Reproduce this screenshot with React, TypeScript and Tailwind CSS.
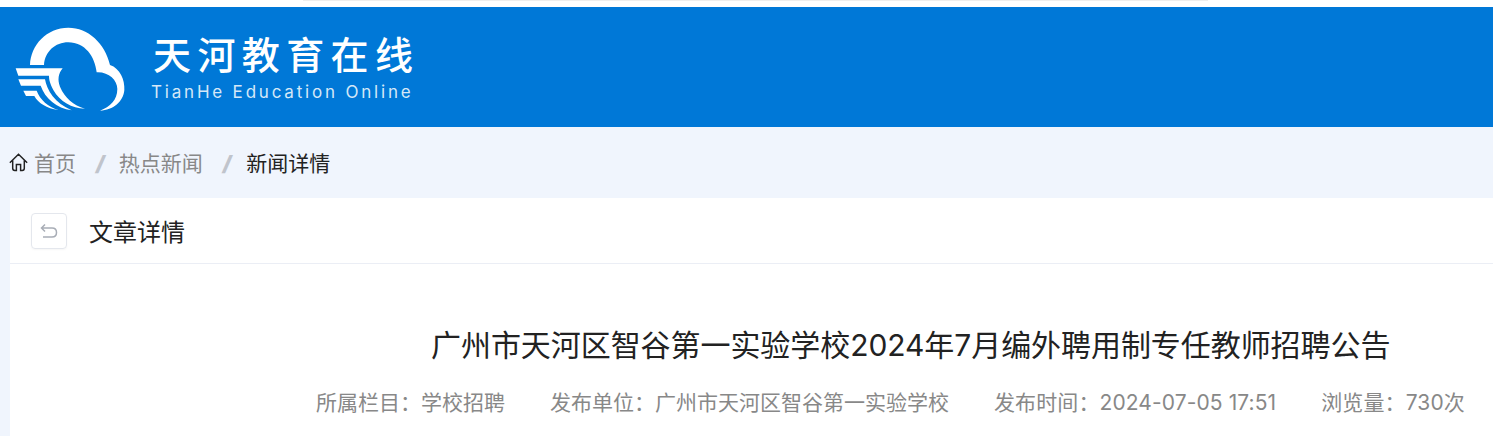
const COLON = '\uFF1A';

const Logo = () => (
  <svg width="140" height="105" viewBox="0 0 420 315" className="shrink-0">
    <path
      fill="#fff"
      d="M90 150 C92 90 140 38 205 38 C265 38 315 85 330 150 C360 160 375 195 373 225 C370 260 340 285 300 287 C330 275 352 255 352 222 C352 195 325 170 290 172 C285 125 255 82 205 82 C165 82 135 110 132 150 Z"
    />
    <path fill="#fff" d="M47 160 H188 C175 175 172 195 180 215 C195 250 220 270 255 281 C215 280 180 260 160 225 C150 205 147 195 147 182 H55 Z" />
    <path fill="#fff" d="M55 193 H135 C140 225 165 265 215 286 C170 280 135 250 122 212 H63 Z" />
    <path fill="#fff" d="M70 227 H110 C120 255 145 275 175 285 C140 280 115 265 103 243 H78 Z" />
  </svg>
);

export default function App() {
  return (
    <div className="flex h-[436px] flex-col overflow-hidden bg-white font-['Inter','Noto_Sans_CJK_SC',sans-serif]">
      <div className="h-[7px]">
        <div className="ml-[303px] h-[1px] w-[905px] bg-[#eeeeee]" />
      </div>
      <div className="flex h-[120px] items-center bg-[#0078d7]">
        <Logo />
        <div className="ml-[13px] flex flex-col text-white">
          <div className="text-[38px] leading-[44px] font-medium tracking-[6.4px] whitespace-nowrap">天河教育在线</div>
          <div className="mt-[5px] -ml-[2px] text-[17px] leading-[20px] tracking-[2.8px] whitespace-nowrap text-[#d5e8f8]">
            TianHe Education Online
          </div>
        </div>
      </div>
      <div className="flex flex-1 flex-col bg-[#f0f5fd] pl-[10px]">
        <div className="flex h-[71px] items-center pt-[2px] text-[21px] text-[#888]">
          <svg width="19" height="19" viewBox="0 0 18 18" fill="none" stroke="#222" strokeWidth="1.4" className="mr-[6px] -mt-[2px] -ml-[1px]">
            <path d="M0.8 9.2 L9 1.2 L17.2 9.2 M3.5 7 V14.5 C3.5 15.8 4.2 16.5 5.5 16.5 H7 V11 H11 V16.5 H12.5 C13.8 16.5 14.5 15.8 14.5 14.5 V7" />
          </svg>
          <span>首页</span>
          <span className="mr-[14px] ml-[20px] font-black text-[#c0c4cc] italic">/</span>
          <span>热点新闻</span>
          <span className="mr-[15px] ml-[20px] font-black text-[#c0c4cc] italic">/</span>
          <span className="text-[#222]">新闻详情</span>
        </div>
        <div className="flex-1 bg-white">
          <div className="flex h-[66px] items-center border-b border-[#ebeef5] pl-[21px]">
            <div className="mt-[1px] flex h-[36px] w-[36px] items-center justify-center rounded-[4px] border border-[#e4e7ed] shadow-[0_1px_2px_rgba(0,0,0,0.04)]">
              <svg width="18" height="16" viewBox="0 0 18 16" fill="none" stroke="#a8adb6" strokeWidth="1.5">
                <path d="M5 1.5 L1.5 5 L5 8.5 M1.5 5 H12 C15 5 16.5 7 16.5 9.5 C16.5 12 15 14 12 14 H3" />
              </svg>
            </div>
            <h2 className="mt-[5px] ml-[22px] text-[24px] font-normal text-[#222]">文章详情</h2>
          </div>
          <div className="pt-[58px]">
            <h1 className="pl-[421px] text-[30px] leading-[46px] font-normal tracking-[-0.06px] whitespace-nowrap text-[#222]">
              广州市天河区智谷第一实验学校2024年7月编外聘用制专任教师招聘公告
            </h1>
            <div className="mt-[19px] flex gap-[45px] pl-[306px] text-[21px] leading-[32px] whitespace-nowrap text-[#888]">
              <span>所属栏目{COLON}学校招聘</span>
              <span>发布单位{COLON}广州市天河区智谷第一实验学校</span>
              <span className="tracking-[0.1px]">发布时间{COLON}2024-07-05 17:51</span>
              <span className="tracking-[0.1px]">浏览量{COLON}730次</span>
            </div>
          </div>
        </div>
      </div>
    </div>
  );
}
